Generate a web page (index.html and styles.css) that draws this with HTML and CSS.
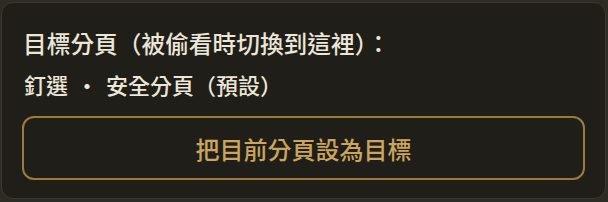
FILE: index.html
```html
<!DOCTYPE html>
<html lang="zh-TW">
<head>
    <meta charset="UTF-8">
    <meta name="viewport" content="width=device-width, initial-scale=1.0">
    <title>目標分頁</title>
    <link rel="stylesheet" href="styles.css">
</head>
<body>
    <div class="target-card">
        <div class="target-title">目標分頁（被偷看時切換到這裡）：</div>
        <div class="target-current">
            <span>釘選</span>
            <span class="sep">·</span>
            <span>安全分頁（預設）</span>
        </div>
        <button class="target-btn" id="set-target">把目前分頁設為目標</button>
    </div>
</body>
</html>
```

FILE: styles.css
```css
* {
    margin: 0;
    padding: 0;
    box-sizing: border-box;
}

body {
    font-family: "Noto Sans CJK TC", "Noto Sans", sans-serif;
    background: #2d2b24;
    padding: 2px 2px 3px 1px;
    overflow: hidden;
}

.target-card {
    background: #201e18;
    border: 1px solid #3a382e;
    border-radius: 12px;
    padding: 23px 20px 18px 20px;
    height: 197px;
}

.target-title {
    color: #ebe6d8;
    font-size: 23.7px;
    font-weight: 500;
    line-height: 34px;
    padding-left: 1px;
}

.target-current {
    color: #ebe6d8;
    font-size: 22px;
    font-weight: 500;
    line-height: 30px;
    margin-top: 9px;
    padding-left: 2px;
    display: flex;
    align-items: center;
}

.target-current .sep {
    width: 38px;
    text-align: center;
}

.target-btn {
    display: block;
    width: 100%;
    height: 64px;
    margin-top: 17px;
    background: transparent;
    border: 2px solid #9a7c3e;
    border-radius: 12px;
    color: #cba55d;
    font-family: inherit;
    font-size: 24px;
    font-weight: 500;
    cursor: pointer;
}

.target-btn:hover {
    background: rgba(201, 163, 92, 0.08);
}
```
